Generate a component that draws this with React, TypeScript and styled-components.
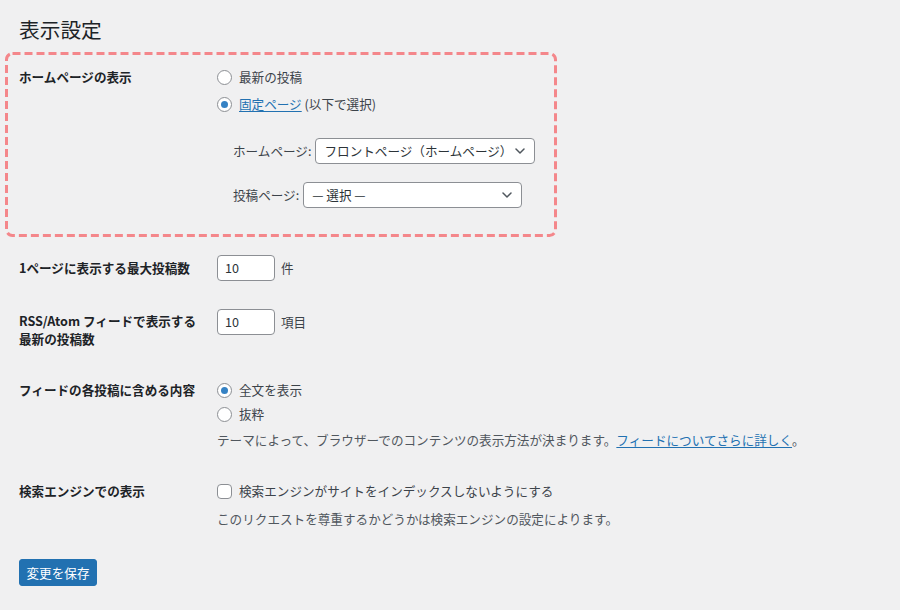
import React from "react";
import styled, { createGlobalStyle } from "styled-components";

const Global = createGlobalStyle`
  html, body { margin: 0; padding: 0; background: #f0f0f1; }
  body {
    font-family: "Noto Sans CJK JP", "Noto Sans", sans-serif;
    font-size: 12.6px;
    color: #3c434a;
  }
  * { box-sizing: border-box; }
`;

const Page = styled.div`
  width: 900px;
  height: 610px;
  padding: 16px 0 0 19px;
  overflow: hidden;
`;

const Title = styled.h1`
  margin: 0;
  font-size: 20.7px;
  font-weight: 400;
  line-height: 27px;
  color: #1d2327;
`;

const Highlight = styled.div`
  position: relative;
  margin: 9px 0 0 -14px;
  width: 552px;
  height: 185px;
  padding: 16px 0 0 14px;
`;

const DashFrame = styled.svg`
  position: absolute;
  inset: 0;
  width: 100%;
  height: 100%;
  pointer-events: none;
  overflow: visible;
`;

const Row = styled.div<{ $top: number }>`
  display: grid;
  grid-template-columns: 198px 1fr;
  align-items: start;
  padding-top: ${(p) => p.$top}px;
`;

const Th = styled.div<{ $offset?: number }>`
  font-weight: 700;
  color: #1d2327;
  line-height: 17.5px;
  padding-top: ${(p) => p.$offset ?? 0}px;
`;

const Td = styled.div`
  display: flex;
  flex-direction: column;
  align-items: flex-start;
  line-height: 18px;
`;

const OptionLine = styled.label<{ $mt?: number }>`
  display: flex;
  align-items: center;
  gap: 7px;
  height: 18px;
  margin-top: ${(p) => p.$mt ?? 0}px;
  color: #3c434a;
`;

const Radio = styled.span<{ $checked?: boolean }>`
  width: 15px;
  height: 15px;
  border-radius: 50%;
  border: 1px solid #8c8f94;
  background: #fff;
  display: flex;
  align-items: center;
  justify-content: center;
  flex: none;
  &::after {
    content: "";
    width: 7px;
    height: 7px;
    border-radius: 50%;
    background: ${(p) => (p.$checked ? "#3582c4" : "transparent")};
  }
`;

const Checkbox = styled.span`
  width: 15px;
  height: 15px;
  border-radius: 4px;
  border: 1px solid #8c8f94;
  background: #fff;
  flex: none;
`;

const Link = styled.a`
  color: #2271b1;
  text-decoration: underline;
  text-underline-offset: 2px;
`;

const SelectRow = styled.div<{ $mt: number }>`
  display: flex;
  align-items: center;
  gap: 4px;
  margin: ${(p) => p.$mt}px 0 0 16px;
  color: #3c434a;
`;

const SelectBox = styled.div<{ $w: number }>`
  width: ${(p) => p.$w}px;
  height: 26px;
  border: 1px solid #8c8f94;
  border-radius: 4px;
  background: #fff;
  display: flex;
  align-items: center;
  justify-content: space-between;
  padding: 0 9px 0 8px;
  color: #2c3338;
  white-space: nowrap;
`;

const NumberLine = styled.div`
  display: flex;
  align-items: center;
  gap: 6px;
  color: #3c434a;
`;

const NumberInput = styled.div`
  width: 58px;
  height: 26px;
  border: 1px solid #8c8f94;
  border-radius: 4px;
  background: #fff;
  display: flex;
  align-items: center;
  padding-left: 7px;
  color: #2c3338;
`;

const Desc = styled.p<{ $mt: number }>`
  margin: ${(p) => p.$mt}px 0 0;
  line-height: 18px;
  color: #50575e;
`;

const SaveButton = styled.button`
  margin-top: 31px;
  width: 78px;
  height: 27px;
  border: 1px solid #2271b1;
  border-radius: 3px;
  background: #2271b1;
  color: #fff;
  font-family: inherit;
  font-size: 12.6px;
  padding: 0;
  display: flex;
  align-items: center;
  justify-content: center;
`;

const Chevron = () => (
  <svg width="10" height="6" viewBox="0 0 10 6" fill="none">
    <path d="M1 1l4 4 4-4" stroke="#50575e" strokeWidth="1.5" strokeLinecap="round" strokeLinejoin="round" />
  </svg>
);

export default function App() {
  return (
    <>
      <Global />
      <Page>
        <Title>表示設定</Title>

        <Highlight>
          <DashFrame>
            <rect x="1.5" y="1.5" width="549" height="182" rx="6" ry="6" fill="none" stroke="#f4878b" strokeWidth="3" strokeDasharray="8 4" />
          </DashFrame>
          <Row $top={0}>
            <Th $offset={0}>ホームページの表示</Th>
            <Td>
              <OptionLine>
                <Radio />
                最新の投稿
              </OptionLine>
              <OptionLine $mt={9}>
                <Radio $checked />
                <span>
                  <Link>固定ページ</Link> (以下で選択)
                </span>
              </OptionLine>
              <SelectRow $mt={25}>
                <span>ホームページ:</span>
                <SelectBox $w={220}>
                  <span>フロントページ（ホームページ）</span>
                  <Chevron />
                </SelectBox>
              </SelectRow>
              <SelectRow $mt={18}>
                <span>投稿ページ:</span>
                <SelectBox $w={219}>
                  <span>— 選択 —</span>
                  <Chevron />
                </SelectBox>
              </SelectRow>
            </Td>
          </Row>
        </Highlight>

        <Row $top={18}>
          <Th $offset={4}>1ページに表示する最大投稿数</Th>
          <Td>
            <NumberLine>
              <NumberInput>10</NumberInput>
              件
            </NumberLine>
          </Td>
        </Row>

        <Row $top={28}>
          <Th $offset={3}>
            RSS/Atom フィードで表示する
            <br />
            最新の投稿数
          </Th>
          <Td>
            <NumberLine>
              <NumberInput>10</NumberInput>
              項目
            </NumberLine>
          </Td>
        </Row>

        <Row $top={34}>
          <Th $offset={0}>フィードの各投稿に含める内容</Th>
          <Td>
            <OptionLine>
              <Radio $checked />
              全文を表示
            </OptionLine>
            <OptionLine $mt={6}>
              <Radio />
              抜粋
            </OptionLine>
            <Desc $mt={8}>
              テーマによって、ブラウザーでのコンテンツの表示方法が決まります。<Link>フィードについてさらに詳しく</Link>。
            </Desc>
          </Td>
        </Row>

        <Row $top={33}>
          <Th $offset={0}>検索エンジンでの表示</Th>
          <Td>
            <OptionLine>
              <Checkbox />
              検索エンジンがサイトをインデックスしないようにする
            </OptionLine>
            <Desc $mt={10}>このリクエストを尊重するかどうかは検索エンジンの設定によります。</Desc>
          </Td>
        </Row>

        <SaveButton>変更を保存</SaveButton>
      </Page>
    </>
  );
}
